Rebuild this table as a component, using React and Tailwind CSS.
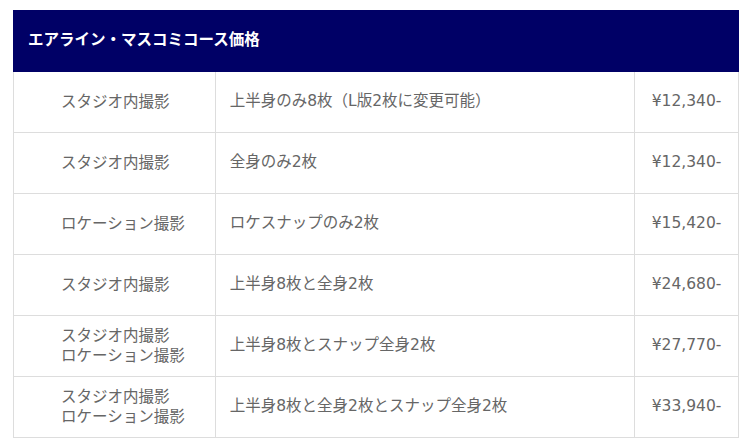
import React from "react";

const rows = [
  { place: ["スタジオ内撮影"], plan: "上半身のみ8枚（L版2枚に変更可能）", price: "¥12,340-" },
  { place: ["スタジオ内撮影"], plan: "全身のみ2枚", price: "¥12,340-" },
  { place: ["ロケーション撮影"], plan: "ロケスナップのみ2枚", price: "¥15,420-" },
  { place: ["スタジオ内撮影"], plan: "上半身8枚と全身2枚", price: "¥24,680-" },
  { place: ["スタジオ内撮影", "ロケーション撮影"], plan: "上半身8枚とスナップ全身2枚", price: "¥27,770-" },
  { place: ["スタジオ内撮影", "ロケーション撮影"], plan: "上半身8枚と全身2枚とスナップ全身2枚", price: "¥33,940-" },
];

const App = () => {
  return (
    <div
      className="bg-white w-[750px] h-[440px] pt-[10px] pl-[13px]"
      style={{ fontFamily: '"DejaVu Sans", "Noto Sans CJK JP", sans-serif' }}
    >
      <table className="w-[726px] border-collapse text-[15.5px] text-[#666]">
        <thead>
          <tr className="h-[61px]">
            <th
              colSpan={3}
              className="bg-[#000066] text-white text-left font-bold text-[15.5px] pl-[14px] border border-[#000066]"
            >
              エアライン・マスコミコース価格
            </th>
          </tr>
        </thead>
        <tbody>
          {rows.map((r, i) => (
            <tr key={i} className="h-[61px]">
              <td className="w-[202px] border border-[#ddd] pl-[47px] leading-[20px]">
                {r.place.map((p) => (
                  <div key={p}>{p}</div>
                ))}
              </td>
              <td className="w-[420px] border border-[#ddd] pl-[14px]">{r.plan}</td>
              <td className="w-[104px] border border-[#ddd] text-center">{r.price}</td>
            </tr>
          ))}
        </tbody>
      </table>
    </div>
  );
};

export default App;
